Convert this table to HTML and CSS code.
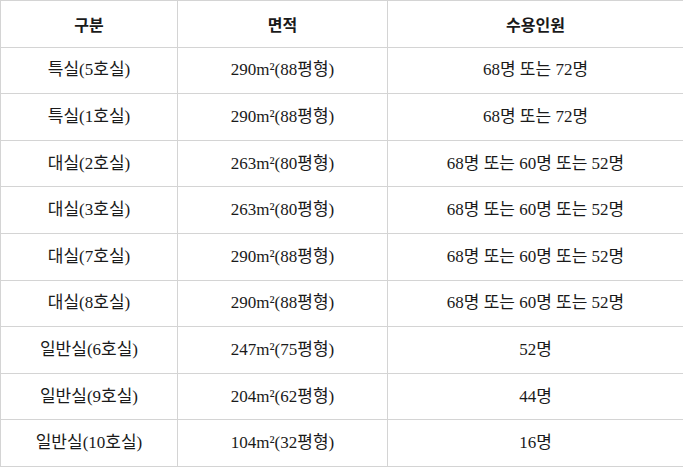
FILE: index.html
```html
<!DOCTYPE html>
<html lang="ko">
<head>
<meta charset="utf-8">
<link rel="stylesheet" href="styles.css">
</head>
<body>
<table class="rooms">
  <colgroup>
    <col class="c1"><col class="c2"><col class="c3">
  </colgroup>
  <thead>
    <tr><th>구분</th><th>면적</th><th>수용인원</th></tr>
  </thead>
  <tbody>
    <tr><td>특실(5호실)</td><td>290m²(88평형)</td><td>68명 또는 72명</td></tr>
    <tr><td>특실(1호실)</td><td>290m²(88평형)</td><td>68명 또는 72명</td></tr>
    <tr><td>대실(2호실)</td><td>263m²(80평형)</td><td>68명 또는 60명 또는 52명</td></tr>
    <tr><td>대실(3호실)</td><td>263m²(80평형)</td><td>68명 또는 60명 또는 52명</td></tr>
    <tr><td>대실(7호실)</td><td>290m²(88평형)</td><td>68명 또는 60명 또는 52명</td></tr>
    <tr><td>대실(8호실)</td><td>290m²(88평형)</td><td>68명 또는 60명 또는 52명</td></tr>
    <tr><td>일반실(6호실)</td><td>247m²(75평형)</td><td>52명</td></tr>
    <tr><td>일반실(9호실)</td><td>204m²(62평형)</td><td>44명</td></tr>
    <tr><td>일반실(10호실)</td><td>104m²(32평형)</td><td>16명</td></tr>
  </tbody>
</table>
</body>
</html>
```
FILE: styles.css
```css
html, body {
  margin: 0;
  padding: 0;
  background: #fff;
}
.rooms {
  width: 683px;
  border-collapse: collapse;
  table-layout: fixed;
  font-family: "Liberation Serif", "Noto Sans CJK KR", serif;
  font-size: 17px;
  color: #1a1a1a;
}
.c1 { width: 177px; }
.c2 { width: 210px; }
.c3 { width: 296px; }
.rooms tr {
  height: 46.6px;
}
.rooms th,
.rooms td {
  border: 1px solid #d4d4d4;
  text-align: center;
  vertical-align: middle;
  padding: 0;
  line-height: 20px;
}
.rooms th {
  font-family: "Noto Sans CJK KR", sans-serif;
  font-weight: 700;
  font-size: 16px;
}
```
